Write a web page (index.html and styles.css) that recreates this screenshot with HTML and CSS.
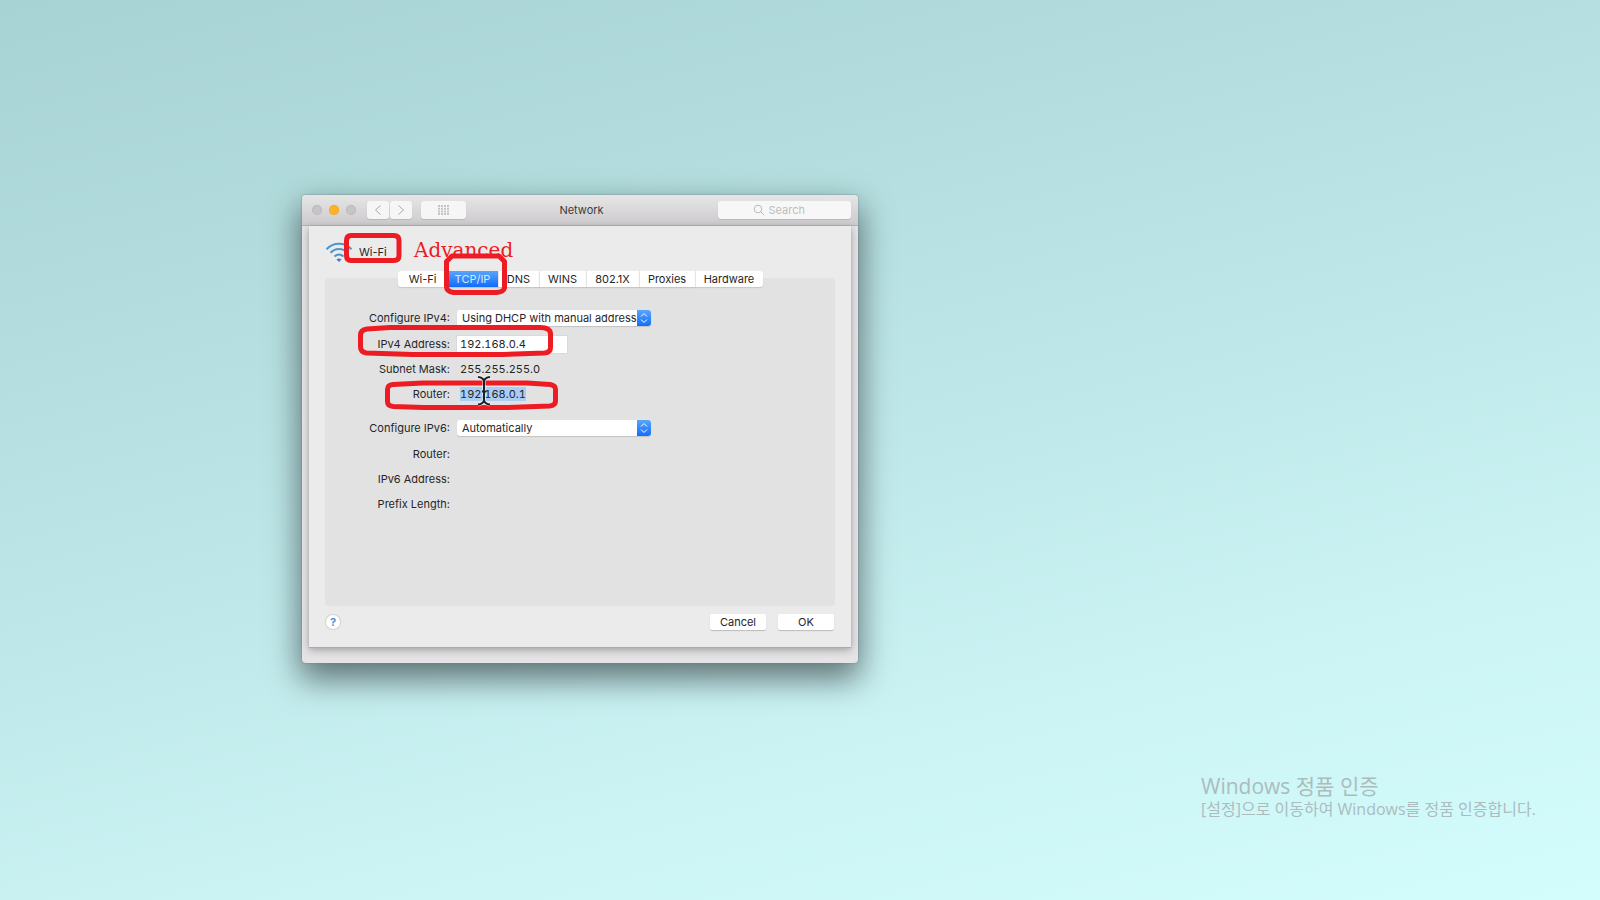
FILE: index.html
```html
<!DOCTYPE html>
<html lang="en">
<head>
<meta charset="utf-8">
<title>Network</title>
<link rel="stylesheet" href="styles.css">
</head>
<body>
<main class="desktop">
  <section class="window" aria-label="Network">
    <header class="titlebar">
      <div class="tools">
        <div class="lights">
          <button class="light" aria-label="Close"></button>
          <button class="light amber" aria-label="Minimize"></button>
          <button class="light" aria-label="Zoom"></button>
        </div>
        <div class="nav">
          <button class="tool" aria-label="Back"><svg width="8" height="12" viewBox="0 0 8 12"><path d="M6.500 1.500 1.500 6l5 4.500"/></svg></button>
          <button class="tool" aria-label="Forward"><svg width="8" height="12" viewBox="0 0 8 12"><path d="M1.500 1.500 6.500 6l-5 4.500"/></svg></button>
        </div>
        <button class="tool wide" aria-label="Show all"><svg class="grid" width="14" height="10" viewBox="0 0 14 10"><path d="M1 1h12M1 3.700h12M1 6.400h12M1 9.100h12"/></svg></button>
      </div>
      <h1 class="title">Network</h1>
      <label class="search">
        <svg width="12" height="12" viewBox="0 0 12 12"><circle cx="5" cy="5" r="3.800"/><path d="m8 8 3.200 3.200"/></svg>
        <input type="search" placeholder="Search" aria-label="Search">
      </label>
    </header>
    <div class="body">
      <div class="sheet">
        <div class="service">
          <svg class="wifi" width="28" height="22" viewBox="0 0 28 22"><path d="M1.500 8.200C8.500 .8 19.500 .8 26.500 8.200M5.500 11.800c5-5 12-5 17 0M9.500 15.500c3-2.600 6-2.600 9 0"/><path class="dot" d="M11.500 18.400c1.500-1.300 3.500-1.300 5 0L14 21z"/></svg>
          <h2 class="service-name">Wi-Fi</h2>
        </div>
        <nav class="tabs">
          <button class="tab w-50">Wi-Fi</button>
          <button class="tab w-50 active">TCP/IP</button>
          <button class="tab w-41">DNS</button>
          <button class="tab w-47">WINS</button>
          <button class="tab w-53">802.1X</button>
          <button class="tab w-56">Proxies</button>
          <button class="tab w-68">Hardware</button>
        </nav>
        <form class="panel">
          <div class="row tall">
            <label class="name" for="v4">Configure IPv4:</label>
            <span class="picker"><select id="v4"><option>Using DHCP with manual address</option></select><svg class="steps" width="14" height="16" viewBox="0 0 14 16"><path d="m4 6.500 3-3 3 3M4 9.500l3 3 3-3"/></svg></span>
          </div>
          <div class="row">
            <label class="name" for="addr">IPv4 Address:</label>
            <input class="field" id="addr" type="text" value="192.168.0.4">
          </div>
          <div class="row"><span class="name">Subnet Mask:</span><span class="value">255.255.255.0</span></div>
          <div class="row"><span class="name">Router:</span><span class="value"><mark>192.168.0.1</mark></span></div>
          <div class="row tall second">
            <label class="name" for="v6">Configure IPv6:</label>
            <span class="picker"><select id="v6"><option>Automatically</option></select><svg class="steps" width="14" height="16" viewBox="0 0 14 16"><path d="m4 6.500 3-3 3 3M4 9.500l3 3 3-3"/></svg></span>
          </div>
          <div class="row"><span class="name">Router:</span></div>
          <div class="row"><span class="name">IPv6 Address:</span></div>
          <div class="row"><span class="name">Prefix Length:</span></div>
        </form>
        <footer class="actions">
          <button class="help" aria-label="Help">?</button>
          <div class="buttons">
            <button class="push">Cancel</button>
            <button class="push">OK</button>
          </div>
        </footer>
      </div>
    </div>
    <span class="note">Advanced</span>
    <svg class="marks" width="556" height="468" viewBox="302 195 556 468" aria-hidden="true">
      <g class="pen">
        <path d="M351 235.500h43q5 0 5 5v15q0 5-5 5h-43q-4.500 0-4.500-5v-15q0-5 4.500-5z"/>
        <path d="M452 256h47l5.500 5.500v26.500q-1 4-8 4.500h-43q-7-1-7-6v-25z"/>
        <path d="m367 329 23-1.500h150q10 0 10.500 6v14q0 5-6 5.500l-42 1.500h-90l-46-1.500q-6-1-6-6v-12q0-5 6.500-6z"/>
        <path d="m393 384.500 30-1.500h104l23 1.500q6 1 5.500 5.500v11q0 4.500-6 5l-42 1.500h-84l-30-1q-6-.5-6-5v-12q0-4.500 5.500-5z"/>
      </g>
      <path class="beam-edge" d="M478 377q5 .5 6 4 1-3.500 6-4M484 380v23M478 404.500q5-.5 6-4 1 3.500 6 4"/>
      <path class="beam" d="M478 377q5 .5 6 4 1-3.500 6-4M484 380v23M482 391.500h4M478 404.500q5-.5 6-4 1 3.500 6 4"/>
    </svg>
  </section>
  <aside class="activation" lang="ko">
    <p class="activation-title">Windows 정품 인증</p>
    <p class="activation-text">[설정]으로 이동하여 Windows를 정품 인증합니다.</p>
  </aside>
</main>
</body>
</html>
```
FILE: styles.css
```css
* { box-sizing: border-box; }
body { margin: 0; }
h1, h2, p { margin: 0; font-weight: 400; }
button, input, select {
  margin: 0; padding: 0; border: 0;
  font: inherit; color: inherit;
  appearance: none;
}
svg { display: block; fill: none; flex: none; }

.desktop {
  position: relative;
  min-height: 100vh;
  overflow: hidden;
  background: linear-gradient(166deg, #a8d3d4 0%, #b2dcdd 25%, #bfe8ea 52%, #ccf4f5 75%, #d3fcfd 100%);
}

/* Window frame */
.window {
  position: absolute;
  left: 302px; top: 195px;
  width: 556px;
  border-radius: 4px;
  background: #e6e3e6;
  box-shadow: 0 0 1px 1px rgba(110, 130, 130, .3), 0 14px 32px 2px rgba(0, 0, 0, .52);
  font: 11px/16px Inter, "Liberation Sans", sans-serif;
  color: #262626;
}
.titlebar {
  display: grid;
  grid-template-columns: 1fr auto 1fr;
  align-items: center;
  height: 31px;
  padding: 0 7px 0 10px;
  border-radius: 4px 4px 0 0;
  border-bottom: 1px solid #b3b1b3;
  background: linear-gradient(#e7e6e7, #cccacc);
}
.tools { display: flex; align-items: center; }
.lights { display: flex; gap: 7px; margin-right: 11px; }
.light {
  width: 10px; height: 10px;
  border-radius: 50%;
  background: #c6c5c6;
  box-shadow: inset 0 0 0 1px #bcbbbc;
}
.light.amber { background: #fdb325; box-shadow: inset 0 0 0 1px #f3ab2c; }
.nav { display: flex; gap: 1px; margin-right: 9px; }
.tool {
  display: flex; align-items: center; justify-content: center;
  width: 22px; height: 18px;
  border-radius: 3px;
  background: #f6f6f6;
  box-shadow: 0 1px 1px rgba(0, 0, 0, .12);
  stroke: #a9a9a9;
}
.tool.wide { width: 45px; }
.grid { stroke-width: 2; stroke-dasharray: 2 1; stroke: #c5c5c5; }
.title { font-size: 11px; line-height: 16px; color: #3c3c3c; }
.search {
  justify-self: end;
  display: flex; align-items: center; justify-content: center; gap: 4px;
  width: 133px; height: 18px;
  border-radius: 3px;
  background: #f7f7f7;
  box-shadow: 0 1px 1px rgba(0, 0, 0, .12);
  stroke: #b9b9b9;
}
.search input { width: 48px; background: none; outline: 0; }
.search input::-webkit-search-cancel-button { display: none; }
.search input::placeholder { color: #bebebe; opacity: 1; }

/* Settings sheet */
.body { padding: 0 7px 16px; }
.sheet {
  padding: 16px 16px 17px;
  background: #ebebeb;
  box-shadow: 0 1px 1px #aaa, 0 3px 8px rgba(0, 0, 0, .3);
}
.service { display: flex; align-items: center; gap: 6px; height: 20px; }
.wifi { stroke: #4c94cc; stroke-width: 2; }
.wifi .dot { fill: #3983c4; stroke: none; }
.service-name { font-size: 11px; line-height: 16px; }
.tabs {
  position: relative;
  z-index: 1;
  display: flex; justify-content: center;
  margin: 9px 0 -9px;
}
.tab {
  height: 16px;
  background: #fff;
  border-left: 1px solid #e4e4e4;
  box-shadow: 0 1px 1px rgba(0, 0, 0, .12);
}
.tab:first-child { border-left: 0; border-radius: 3px 0 0 3px; }
.tab:last-child { border-radius: 0 3px 3px 0; }
.tab.active { border: 0; color: #d4e9ff; background: linear-gradient(#5aa5fa, #0f6dfc); }
.w-41 { width: 41px; }
.w-47 { width: 47px; }
.w-50 { width: 50px; }
.w-53 { width: 53px; }
.w-56 { width: 56px; }
.w-68 { width: 68px; }

.panel {
  display: flex; flex-direction: column; gap: 9px;
  min-height: 328px;
  padding: 32px 0 0;
  border-radius: 3px;
  background: #e2e2e2;
}
.row { display: flex; align-items: center; gap: 7px; height: 16px; }
.row.tall { align-items: flex-start; height: 17px; }
.row.second { margin-top: 9px; }
.name { width: 125px; text-align: right; }
.value { padding-left: 3px; }
.value, .field { font-variant-numeric: tabular-nums; }
.value mark { background: #a9cdf5; color: inherit; }
.picker { position: relative; display: flex; width: 194px; }
.picker select {
  width: 100%; height: 16px;
  padding: 0 0 0 5px;
  border-radius: 3px;
  background: #fff;
  box-shadow: 0 1px 1px rgba(0, 0, 0, .14);
}
.steps {
  position: absolute; right: 0; top: 0;
  border-radius: 0 3px 3px 0;
  background: linear-gradient(#5ba5fa, #126efb);
  stroke: #fff;
  pointer-events: none;
}
.field {
  width: 110px; height: 17px;
  padding: 0 3px;
  background: #fff;
  box-shadow: 0 0 0 1px #dadada;
}

.actions { display: flex; justify-content: space-between; align-items: center; padding: 8px 1px 0; }
.help {
  width: 14px; height: 14px;
  border-radius: 50%;
  background: #fff;
  box-shadow: 0 0 1px 1px rgba(0, 0, 0, .1);
  font-weight: 700; line-height: 14px;
  color: #4c93d4;
}
.buttons { display: flex; gap: 12px; }
.push {
  width: 56px; height: 16px;
  border-radius: 2px;
  background: #fff;
  box-shadow: 0 1px 1px rgba(0, 0, 0, .2);
}

/* Pen annotations over the window */
.note {
  position: absolute; left: 112px; top: 43px;
  font: 20px/24px "DejaVu Serif", serif;
  color: #ed1c24;
}
.marks { position: absolute; left: 0; top: 0; z-index: 2; pointer-events: none; }
.pen { stroke: #ed1c24; stroke-width: 5; stroke-linejoin: round; }
.beam-edge { stroke: rgba(255, 255, 255, .5); stroke-width: 4; }
.beam { stroke: #1d2024; stroke-width: 2; }

/* Activation notice */
.activation {
  position: absolute; left: 1201px; top: 774px;
  font-family: "Open Sans", "Noto Sans CJK KR", sans-serif;
  font-weight: 300;
  color: #acbcbd;
  white-space: nowrap;
}
.activation-title { font-size: 21px; line-height: 24px; }
.activation-text { font-size: 16px; line-height: 22px; }
```
